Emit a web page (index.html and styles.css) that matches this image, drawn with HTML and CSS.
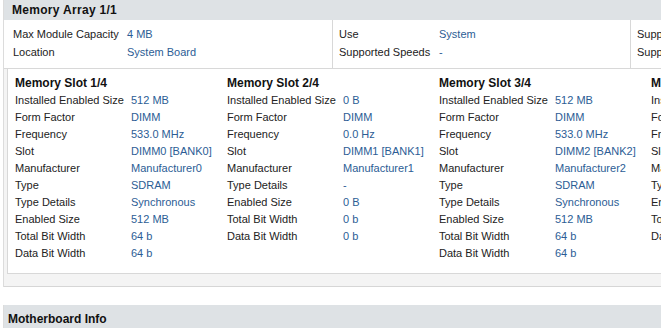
FILE: index.html
```html
<!DOCTYPE html>
<html lang="en">

<head>
    <meta charset="UTF-8">
    <title>Memory Info</title>
    <link rel="stylesheet" href="styles.css">
</head>

<body>
    <div class="section">
        <div class="section-head">Memory Array 1/1</div>
        <div class="section-body">
            <table class="props">
                <tr>
                    <td class="cell">
                        <div class="pair"><span class="label">Max Module Capacity</span><span class="value">4 MB</span></div>
                        <div class="pair"><span class="label">Location</span><span class="value">System Board</span></div>
                    </td>
                    <td class="cell">
                        <div class="pair"><span class="label">Use</span><span class="value">System</span></div>
                        <div class="pair"><span class="label">Supported Speeds</span><span class="value">-</span></div>
                    </td>
                    <td class="cell">
                        <div class="pair"><span class="label">Supported Form Factors</span><span class="value">DIMM</span></div>
                        <div class="pair"><span class="label">Supported Voltages</span><span class="value">-</span></div>
                    </td>
                </tr>
            </table>

            <div class="slots">
                <div class="slot">
                    <div class="slot-title">Memory Slot 1/4</div>
                    <div class="pair"><span class="label">Installed Enabled Size</span><span class="value">512 MB</span></div>
                    <div class="pair"><span class="label">Form Factor</span><span class="value">DIMM</span></div>
                    <div class="pair"><span class="label">Frequency</span><span class="value">533.0 MHz</span></div>
                    <div class="pair"><span class="label">Slot</span><span class="value">DIMM0 [BANK0]</span></div>
                    <div class="pair"><span class="label">Manufacturer</span><span class="value">Manufacturer0</span></div>
                    <div class="pair"><span class="label">Type</span><span class="value">SDRAM</span></div>
                    <div class="pair"><span class="label">Type Details</span><span class="value">Synchronous</span></div>
                    <div class="pair"><span class="label">Enabled Size</span><span class="value">512 MB</span></div>
                    <div class="pair"><span class="label">Total Bit Width</span><span class="value">64 b</span></div>
                    <div class="pair"><span class="label">Data Bit Width</span><span class="value">64 b</span></div>
                </div>
                <div class="slot">
                    <div class="slot-title">Memory Slot 2/4</div>
                    <div class="pair"><span class="label">Installed Enabled Size</span><span class="value">0 B</span></div>
                    <div class="pair"><span class="label">Form Factor</span><span class="value">DIMM</span></div>
                    <div class="pair"><span class="label">Frequency</span><span class="value">0.0 Hz</span></div>
                    <div class="pair"><span class="label">Slot</span><span class="value">DIMM1 [BANK1]</span></div>
                    <div class="pair"><span class="label">Manufacturer</span><span class="value">Manufacturer1</span></div>
                    <div class="pair"><span class="label">Type Details</span><span class="value">-</span></div>
                    <div class="pair"><span class="label">Enabled Size</span><span class="value">0 B</span></div>
                    <div class="pair"><span class="label">Total Bit Width</span><span class="value">0 b</span></div>
                    <div class="pair"><span class="label">Data Bit Width</span><span class="value">0 b</span></div>
                </div>
                <div class="slot">
                    <div class="slot-title">Memory Slot 3/4</div>
                    <div class="pair"><span class="label">Installed Enabled Size</span><span class="value">512 MB</span></div>
                    <div class="pair"><span class="label">Form Factor</span><span class="value">DIMM</span></div>
                    <div class="pair"><span class="label">Frequency</span><span class="value">533.0 MHz</span></div>
                    <div class="pair"><span class="label">Slot</span><span class="value">DIMM2 [BANK2]</span></div>
                    <div class="pair"><span class="label">Manufacturer</span><span class="value">Manufacturer2</span></div>
                    <div class="pair"><span class="label">Type</span><span class="value">SDRAM</span></div>
                    <div class="pair"><span class="label">Type Details</span><span class="value">Synchronous</span></div>
                    <div class="pair"><span class="label">Enabled Size</span><span class="value">512 MB</span></div>
                    <div class="pair"><span class="label">Total Bit Width</span><span class="value">64 b</span></div>
                    <div class="pair"><span class="label">Data Bit Width</span><span class="value">64 b</span></div>
                </div>
                <div class="slot">
                    <div class="slot-title">Memory Slot 4/4</div>
                    <div class="pair"><span class="label">Installed Enabled Size</span><span class="value">0 B</span></div>
                    <div class="pair"><span class="label">Form Factor</span><span class="value">DIMM</span></div>
                    <div class="pair"><span class="label">Frequency</span><span class="value">0.0 Hz</span></div>
                    <div class="pair"><span class="label">Slot</span><span class="value">DIMM3 [BANK3]</span></div>
                    <div class="pair"><span class="label">Manufacturer</span><span class="value">Manufacturer3</span></div>
                    <div class="pair"><span class="label">Type Details</span><span class="value">-</span></div>
                    <div class="pair"><span class="label">Enabled Size</span><span class="value">0 B</span></div>
                    <div class="pair"><span class="label">Total Bit Width</span><span class="value">0 b</span></div>
                    <div class="pair"><span class="label">Data Bit Width</span><span class="value">0 b</span></div>
                </div>
            </div>
        </div>
    </div>

    <div class="section section-next">
        <div class="section-head section-head-plain">Motherboard Info</div>
    </div>
</body>

</html>
```

FILE: styles.css
```css
body {
    margin: 0;
    padding: 0 0 0 3px;
    background-color: white;
    font-family: 'Liberation Sans', Arial, sans-serif;
    font-size: 11px;
    color: #222;
    overflow: hidden;
    width: 900px;
}

.section {
    border-left: 1px solid #dcdcdc;
}

.section-head {
    background-color: #dee2e5;
    height: 20px;
    line-height: 21px;
    padding-left: 8px;
    font-size: 12px;
    font-weight: bold;
    color: #111;
    letter-spacing: 0.3px;
}

.section-body {
    background-color: #f4f4f4;
    border-bottom: 1px solid #d6d6d6;
    padding-bottom: 12px;
}

.props {
    border-collapse: collapse;
    background-color: white;
    width: 100%;
}

.cell {
    padding: 5px 0 7px 9px;
    vertical-align: top;
    border-bottom: 1px solid #d8d8d8;
}

.cell + .cell {
    border-left: 1px solid #d8d8d8;
    padding-left: 6px;
}

.props .cell:nth-child(1) {
    width: 319px;
}

.props .cell:nth-child(2) {
    width: 291px;
}

.props .pair {
    height: 18px;
    line-height: 18px;
}

.props .label {
    width: 114px;
}

.props .cell:nth-child(2) .label {
    width: 100px;
}

.props .cell:nth-child(3) .label {
    width: 130px;
}

.pair {
    display: flex;
    white-space: nowrap;
}

.label {
    display: inline-block;
    flex: none;
    width: 116px;
    color: #222;
}

.value {
    color: #2c5d95;
}

.slots {
    display: flex;
    background-color: white;
    border-left: 1px solid #d8d8d8;
    border-bottom: 1px solid #d8d8d8;
    margin-left: 3px;
    padding: 6px 0 11px 7px;
}

.slot {
    width: 212px;
    flex: none;
}

.slot .pair {
    height: 17px;
    line-height: 17px;
}

.slot-title {
    font-size: 12px;
    font-weight: bold;
    color: #111;
    height: 17px;
    line-height: 17px;
}

.section-next {
    margin-top: 18px;
}

.section-head-plain {
    padding-left: 4px;
    height: 23px;
    line-height: 28px;
    letter-spacing: 0;
}
```
